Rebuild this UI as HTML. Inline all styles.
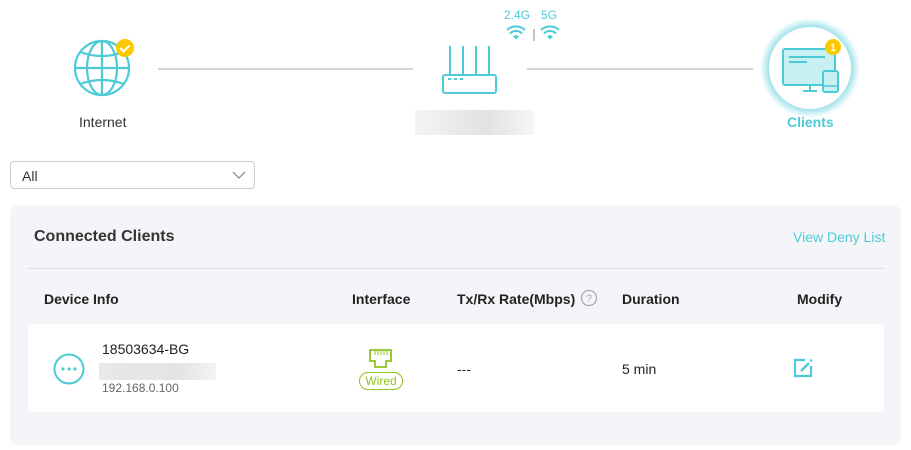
<!DOCTYPE html>
<html><head><style>
body{margin:0;width:911px;height:450px;background:#fff;font-family:"Liberation Sans",sans-serif;position:relative;overflow:hidden;color:#333}
.a{position:absolute}
.h{font-weight:bold;font-size:14px;color:#222}
</style></head><body>
<svg class="a" style="left:0;top:0" width="911" height="140">
<g fill="none" stroke="#4ccbd6" stroke-width="2.2">
<circle cx="102" cy="68" r="27"/>
<ellipse cx="102" cy="68" rx="15" ry="27"/>
<line x1="102" y1="41" x2="102" y2="95"/>
<line x1="75" y1="68" x2="129" y2="68"/>
<path d="M80 52 Q102 60 124 52 M80 84 Q102 76 124 84"/>
</g>
<circle cx="125" cy="48" r="9" fill="#fcc800"/>
<path d="M120 48 l3.5 3.5 l6 -6" stroke="#fff" stroke-width="2" fill="none"/>
<line x1="158" y1="69" x2="413" y2="69" stroke="#aaa"/>
<line x1="527" y1="69" x2="753" y2="69" stroke="#aaa"/>
<g fill="none" stroke="#4ccbd6" stroke-width="2">
<path d="M450 46v29M463 46v29M476 46v29M489 46v29"/>
<rect x="443" y="75" width="53" height="18" rx="2"/>
</g>
<g fill="#4ccbd6"><rect x="448" y="78" width="3" height="2"/><rect x="454" y="78" width="3" height="2"/><rect x="460" y="78" width="3" height="2"/></g>
<g fill="none" stroke="#4ccbd6" stroke-width="2">
<path d="M507 30a13 13 0 0 1 18 0M510 33.5a8.5 8.5 0 0 1 12 0"/>
<path d="M541 30a13 13 0 0 1 18 0M544 33.5a8.5 8.5 0 0 1 12 0"/>
</g>
<path d="M513 36.5l3 3 3-3a4 4 0 0 0-6 0z" fill="#4ccbd6"/><path d="M547 36.5l3 3 3-3a4 4 0 0 0-6 0z" fill="#4ccbd6"/>
<line x1="534" y1="29" x2="534" y2="41" stroke="#888"/>
<text x="504" y="19" font-size="12" fill="#4ccbd6" font-family="Liberation Sans">2.4G</text>
<text x="541" y="19" font-size="12" fill="#4ccbd6" font-family="Liberation Sans">5G</text>
<defs><radialGradient id="g"><stop offset="0.8" stop-color="#4ccbd6" stop-opacity="0.6"/><stop offset="1" stop-color="#4ccbd6" stop-opacity="0"/></radialGradient>
<linearGradient id="b"><stop offset="0" stop-color="#f4f4f4"/><stop offset="0.6" stop-color="#e2e2e2"/><stop offset="1" stop-color="#f6f6f6"/></linearGradient></defs>
<circle cx="810" cy="68" r="50" fill="url(#g)"/>
<circle cx="810" cy="68" r="41" fill="#fff"/>
<rect x="783" y="49" width="52" height="36" rx="2" fill="#c8f0f3" stroke="#4ccbd6" stroke-width="2"/>
<path d="M789 57h36M789 62h18" stroke="#4ccbd6" stroke-width="2"/>
<path d="M803 91h14M810 85v6" stroke="#4ccbd6" stroke-width="2"/>
<rect x="823" y="71" width="15" height="21" rx="2" fill="#c8f0f3" stroke="#4ccbd6" stroke-width="2"/>
<path d="M823 86h15" stroke="#4ccbd6" stroke-width="1.5"/>
<circle cx="833" cy="47" r="8" fill="#fcc800"/>
<text x="833" y="51" font-size="11" fill="#fff" text-anchor="middle" font-family="Liberation Sans" font-weight="bold">1</text>
<rect x="415" y="110" width="119" height="25" fill="url(#b)"/>
</svg>
<div class="a" style="left:79px;top:114px;font-size:14px;color:#333">Internet</div>
<div class="a" style="left:787px;top:114px;font-size:14px;color:#4ccbd6;font-weight:bold">Clients</div>
<div class="a" style="left:10px;top:161px;width:243px;height:26px;border:1px solid #ccc;border-radius:4px"><span class="a" style="left:11px;top:6px;font-size:14px">All</span>
<svg class="a" style="left:221px;top:9px" width="14" height="9"><path d="M1 1l6 6 6-6" stroke="#999" stroke-width="1.5" fill="none"/></svg></div>
<div class="a" style="left:10px;top:205px;width:891px;height:240px;background:#f4f5f9;border-radius:8px"></div>
<div class="a" style="left:34px;top:228px;font-size:16px;font-weight:bold;color:#333">Connected Clients</div>
<div class="a" style="left:793px;top:229px;font-size:14px;color:#4ccbd6">View Deny List</div>
<div class="a" style="left:28px;top:268px;width:856px;height:1px;background:#ddd"></div>
<div class="a h" style="left:44px;top:291px">Device Info</div>
<div class="a h" style="left:352px;top:291px">Interface</div>
<div class="a h" style="left:457px;top:291px">Tx/Rx Rate(Mbps)</div>
<svg class="a" style="left:580px;top:289px" width="18" height="18"><circle cx="9" cy="9" r="7.5" fill="none" stroke="#aaa" stroke-width="1.3"/><text x="9" y="13" font-size="11" text-anchor="middle" fill="#aaa" font-family="Liberation Sans">?</text></svg>
<div class="a h" style="left:622px;top:291px">Duration</div>
<div class="a h" style="left:797px;top:291px">Modify</div>
<div class="a" style="left:28px;top:324px;width:856px;height:88px;background:#fff;border-radius:6px"></div>
<svg class="a" style="left:52px;top:352px" width="34" height="34"><circle cx="17" cy="17" r="14.5" fill="none" stroke="#4ccbd6" stroke-width="2"/><circle cx="11" cy="17" r="1.6" fill="#4ccbd6"/><circle cx="17" cy="17" r="1.6" fill="#4ccbd6"/><circle cx="23" cy="17" r="1.6" fill="#4ccbd6"/></svg>
<div class="a" style="left:102px;top:341px;font-size:14px;color:#222">18503634-BG</div>
<div class="a" style="left:99px;top:363px;width:117px;height:17px;background:linear-gradient(90deg,#e8e8e8,#e4e4e4 70%,#f4f4f4)"></div>
<div class="a" style="left:102px;top:381px;font-size:12px;color:#666">192.168.0.100</div>
<svg class="a" style="left:368px;top:348px" width="26" height="22"><path d="M2 2h21v11h-5v6h-11v-6h-5z" fill="none" stroke="#8fc31f" stroke-width="1.8"/><path d="M7 3v4M10 3v4M13 3v4M16 3v4M19 3v4" stroke="#8fc31f" stroke-width="1"/></svg>
<div class="a" style="left:359px;top:372px;width:42px;height:16px;border:1px solid #8fc31f;border-radius:9px;font-size:12px;color:#8fc31f;text-align:center;line-height:16px">Wired</div>
<div class="a" style="left:457px;top:361px;font-size:14px">---</div>
<div class="a" style="left:622px;top:361px;font-size:14px;color:#222">5 min</div>
<svg class="a" style="left:793px;top:358px" width="20" height="20"><path d="M12 2H2v16h16V8" fill="none" stroke="#4ccbd6" stroke-width="2.2"/><path d="M8 13l8-8" stroke="#4ccbd6" stroke-width="2.4"/><circle cx="18" cy="2.5" r="1.3" fill="#4ccbd6"/></svg>
</body></html>
